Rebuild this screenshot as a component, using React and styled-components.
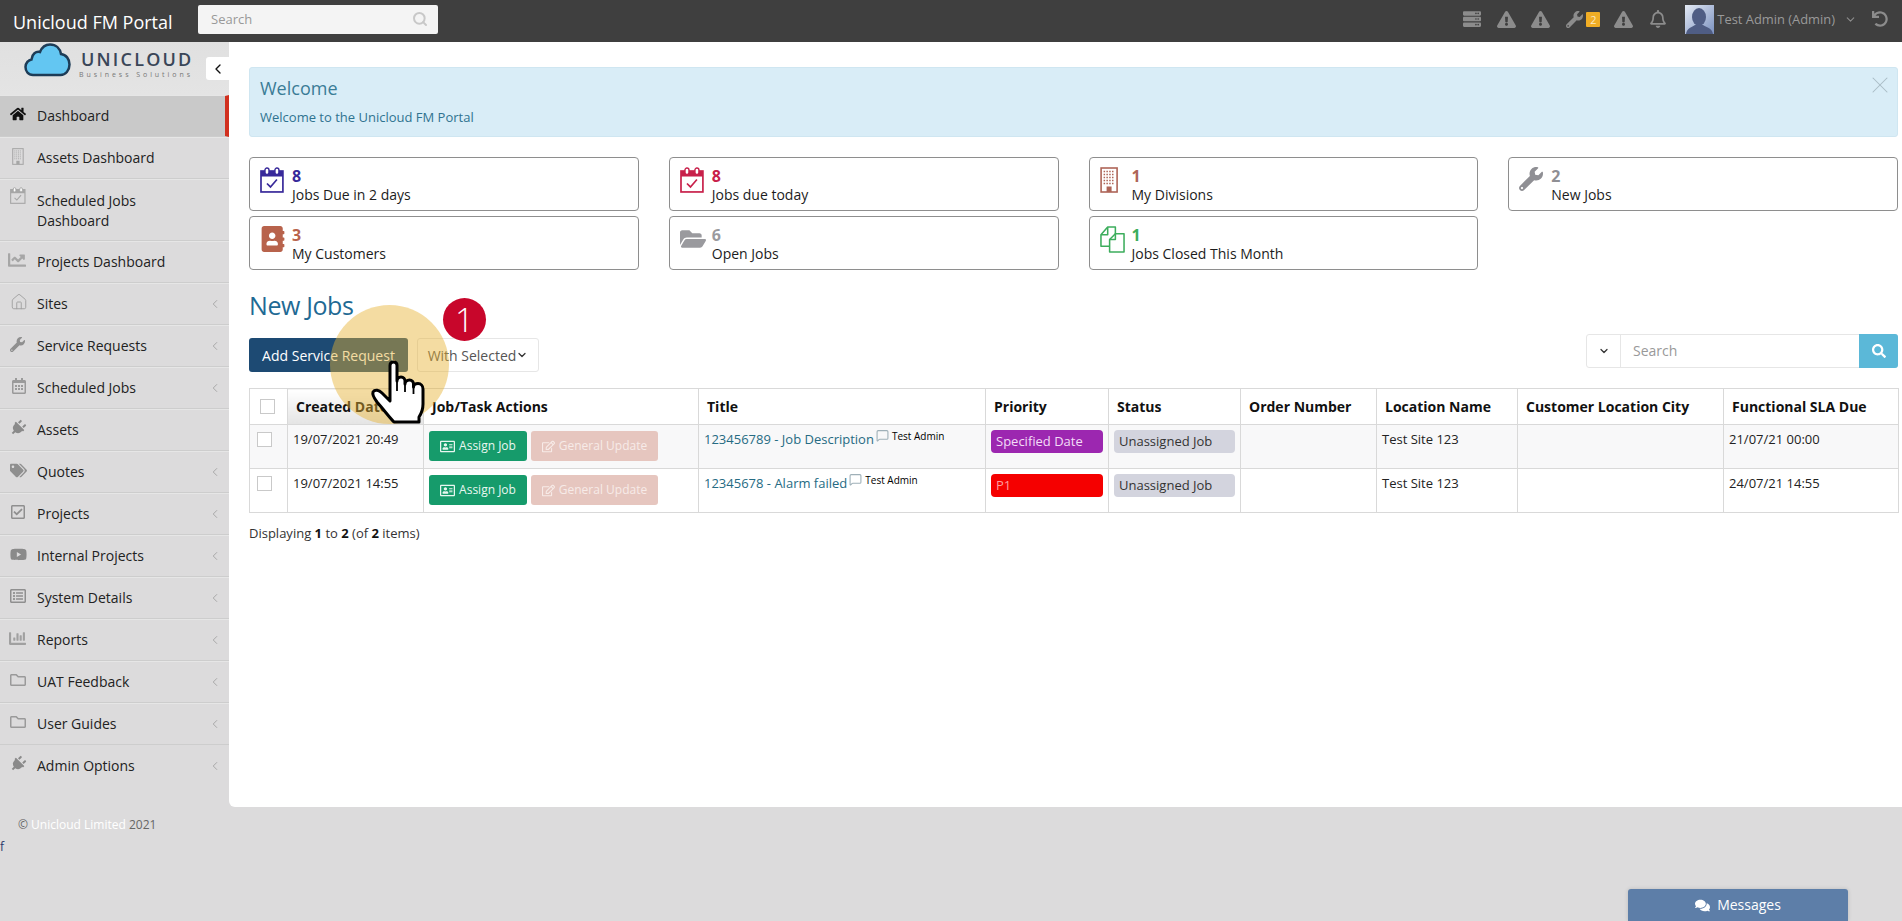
import React from "react";
import styled, { createGlobalStyle } from "styled-components";
import {
  FaHome, FaChartLine, FaWrench, FaRegCalendarAlt, FaPlug, FaTags,
  FaRegCheckSquare, FaYoutube, FaRegListAlt, FaChartBar, FaRegFolder, FaComments, FaServer,
  FaExclamationTriangle, FaRegBell, FaUndo, FaAddressBook, FaFolderOpen, FaRegAddressCard,
  FaRegEdit, FaSearch,
} from "react-icons/fa";
import { ChevronLeft, ChevronDown, Home, Search as SearchLine, X, MessageSquare } from "lucide-react";

const Global = createGlobalStyle`
  html, body { margin: 0; padding: 0; height: 100%; overflow: hidden; }
  body { font-family: "Open Sans", "Liberation Sans", sans-serif; background: #dcdbdc; color: #222; }
  * { box-sizing: border-box; }
`;

const Page = styled.div`display:flex;flex-direction:column;height:921px;position:relative;overflow:hidden;`;

const TopBar = styled.header`height:42px;flex:none;background:#3f3f3f;display:flex;align-items:center;position:relative;`;
const Brand = styled.div`width:198px;padding-left:13px;color:#fff;font-size:18px;line-height:42px;padding-top:2px;white-space:nowrap;`;
const TopSearch = styled.div`width:240px;height:29px;margin-top:-4px;background:#f4f4f4;border-radius:2px;display:flex;align-items:center;justify-content:space-between;padding:0 10px 0 13px;color:#999;font-size:13px;svg{color:#c8c8c8;}`;
const TopRight = styled.div`margin-left:auto;display:flex;align-items:center;height:42px;color:#8c8c8c;padding-right:14px;`;
const TopIcon = styled.span`display:flex;margin-left:${p => p.$ml}px;margin-top:-4px;`;
const Count = styled.span`width:14px;height:15px;background:#f0ad25;color:#fbe9c0;font-size:11px;line-height:15px;text-align:center;margin-left:3px;margin-top:-4px;border-radius:1px;`;
const Avatar = styled.div`width:29px;height:29px;margin-left:18px;margin-top:-4px;background:linear-gradient(135deg,#e4eaf4,#7b91c0);display:flex;align-items:flex-end;overflow:hidden;`;
const UserName = styled.span`font-size:12.9px;color:#9a9a9a;margin-left:3px;margin-top:-4px;white-space:nowrap;`;

const Main = styled.div`display:flex;height:765px;flex:none;`;
const Side = styled.nav`width:229px;flex:none;background:#dcdbdc;`;
const LogoArea = styled.div`height:53px;display:flex;align-items:flex-start;background:linear-gradient(#e0e0e0,#e4e4e4);`;
const Logo = styled.div`display:flex;padding:1px 0 0 24px;width:206px;`;
const LogoText = styled.div`margin-left:10px;padding-top:5px;`;
const LogoTitle = styled.div`font-size:18px;font-weight:600;letter-spacing:2.2px;line-height:22px;color:#3a4658;`;
const LogoSub = styled.div`font-size:7px;letter-spacing:2.95px;line-height:9px;color:#777;white-space:nowrap;margin-left:-2px;`;
const Toggle = styled.div`width:23px;height:23px;margin-top:15px;background:#fff;border-radius:3px 0 0 3px;display:flex;align-items:center;justify-content:center;color:#111;`;
const Item = styled.div`
  height:${p => (p.$tall ? 62 : 42)}px;display:flex;align-items:${p => (p.$tall ? "flex-start" : "center")};position:relative;
  background:${p => (p.$active ? "#c9c9c9" : "transparent")};
  border-right:${p => (p.$active ? "4px solid #d1301f" : "0")};
  border-top:1px solid #e6e6e6;border-bottom:1px solid #cdcdcd;
  padding-top:${p => (p.$tall ? "11px" : "0")};
  &:last-child{border-color:transparent;}
`;
const ItemIcon = styled.span`
  width:37px;padding-left:${p => p.$pl}px;flex:none;display:flex;color:${p => p.$c};margin-top:-4px;
  svg{transform:rotate(${p => p.$rot || 0}deg);}
`;
const ItemLabel = styled.span`font-size:14px;line-height:20px;color:#222;flex:1;`;
const Caret = styled.span`display:flex;color:#a0a0a0;margin-right:7px;`;

const Content = styled.main`flex:1;background:#fff;border-bottom-left-radius:6px;padding:25px 4px 0 20px;min-width:0;`;
const Alert = styled.div`height:70px;background:#d9edf7;border:1px solid #cfe6f1;border-radius:3px;padding:8px 10px 0 10px;color:#31708f;display:flex;justify-content:space-between;`;
const AlertTitle = styled.div`font-size:18px;line-height:24px;color:#3a7c96;`;
const AlertText = styled.div`font-size:13px;line-height:18px;margin-top:8px;color:#2f7390;`;
const Close = styled.span`color:#a9bcc6;display:flex;height:28px;margin-top:-5px;margin-right:-7px;`;

const Cards = styled.section`display:grid;grid-template-columns:repeat(4,1fr);column-gap:30px;row-gap:5px;margin-top:20px;grid-auto-rows:54px;`;
const Card = styled.div`border:1px solid #8e8e8e;border-radius:4px;display:flex;padding:9px 0 0 10px;background:#fff;`;
const CardIcon = styled.div`width:32px;flex:none;display:flex;color:${p => p.$c};`;
const CardNum = styled.div`font-size:16px;font-weight:700;line-height:19px;color:${p => p.$c};`;
const CardLabel = styled.div`font-size:14px;line-height:18px;color:#1c1c1c;`;

const Heading = styled.h1`font-size:25px;font-weight:400;letter-spacing:-.4px;line-height:32px;margin:19px 0 13px;color:#1f6a94;`;
const Toolbar = styled.div`display:flex;justify-content:space-between;align-items:flex-start;height:34px;margin-bottom:20px;position:relative;`;
const BtnRow = styled.div`display:flex;gap:9px;margin-top:4px;`;
const PrimaryBtn = styled.div`width:159px;height:34px;background:#1d4a73;color:#fff;border-radius:3px;font-size:14px;display:flex;align-items:center;justify-content:center;`;
const GhostBtn = styled.div`width:122px;height:34px;border:1px solid #e6e6e6;border-radius:3px;color:#555;font-size:14px;display:flex;align-items:center;justify-content:center;svg{color:#333;}`;
const SearchGroup = styled.div`width:312px;height:34px;display:flex;border:1px solid #e6e6e6;border-radius:3px;`;
const SearchDrop = styled.div`width:34px;border-right:1px solid #e6e6e6;display:flex;align-items:center;justify-content:center;color:#333;`;
const SearchInput = styled.div`flex:1;color:#999;font-size:14px;line-height:32px;padding-left:12px;`;
const SearchBtn = styled.div`width:39px;margin:-1px;background:#5bb8d8;color:#fff;display:flex;align-items:center;justify-content:center;border-radius:0 3px 3px 0;`;

const Glow = styled.div`position:absolute;left:81px;top:-29px;width:119px;height:119px;border-radius:50%;background:rgba(231,177,49,.45);z-index:3;pointer-events:none;`;
const Bubble = styled.div`position:absolute;left:194px;top:-36px;width:43px;height:43px;border-radius:50%;background:#c8062b;color:#fff;font-size:33px;font-weight:300;line-height:43px;text-align:center;z-index:4;`;
const Hand = styled.svg`position:absolute;left:123px;top:28px;width:52px;height:61px;z-index:5;overflow:visible;`;

const Table = styled.table`width:1649px;border-collapse:collapse;table-layout:fixed;border:1px solid #d9d9d9;`;
const Col = styled.col`width:${p => p.$w}px;`;
const HeadRow = styled.tr`height:36px;`;
const Th = styled.th`border:1px solid #d9d9d9;font-size:14px;font-weight:700;text-align:left;padding:0 0 0 8px;color:#111;white-space:nowrap;background:${p => (p.$sorted ? "linear-gradient(#fff,#e4e4e4)" : "#fff")};`;
const Tr = styled.tr`height:44px;background:${p => (p.$odd ? "#f8f8f9" : "#fff")};`;
const Td = styled.td`border:1px solid #d9d9d9;font-size:13px;line-height:18px;vertical-align:top;padding:5px 5px 0;color:#222;white-space:nowrap;`;
const Check = styled.span`display:block;width:15px;height:15px;border:1px solid #c9c9c9;background:#fff;margin-left:${p => p.$ml}px;margin-top:${p => p.$mt}px;`;
const ActionRow = styled.div`display:flex;gap:4px;margin-top:1px;`;
const AssignBtn = styled.div`width:98px;height:30px;background:#169b6b;color:#e9f7f1;border-radius:3px;font-size:12px;display:flex;align-items:center;justify-content:center;gap:4px;`;
const UpdateBtn = styled.div`width:127px;height:30px;background:#e6c6bf;color:#f7ebe8;border-radius:3px;font-size:12px;display:flex;align-items:center;justify-content:center;gap:4px;`;
const TitleRow = styled.div`display:flex;align-items:flex-start;`;
const JobLink = styled.a`color:#266b83;`;
const Bub = styled.span`color:#9fb0b8;display:flex;margin-left:2px;margin-top:-1px;`;
const Author = styled.span`font-size:10px;line-height:14px;color:#000;margin-left:3px;margin-top:-1px;`;
const Pill = styled.div`height:23px;border-radius:4px;font-size:13px;line-height:23px;padding-left:5px;background:${p => p.$bg};color:${p => p.$c};`;
const Summary = styled.p`margin:11px 0 0;font-size:13px;line-height:18px;color:#333;b{color:#111;}`;

const Footer = styled.footer`flex:1;position:relative;padding:10px 0 0 18px;font-size:12px;line-height:16px;color:#666;`;
const FooterBrand = styled.span`color:#fff;`;
const Stray = styled.div`margin-left:-18px;margin-top:6px;font-size:12px;color:#2a3a6a;line-height:16px;`;
const Messages = styled.div`position:absolute;left:1628px;bottom:0;width:220px;height:32px;background:#5d7ea8;color:#fff;border-radius:3px 3px 0 0;font-size:14px;display:flex;align-items:center;justify-content:center;gap:7px;box-shadow:0 0 4px rgba(0,0,0,.15);`;

const CalCheck = ({ size }) => (
  <svg width={size * 0.92} height={size} viewBox="0 0 24 26" aria-hidden="true">
    <rect x="1" y="4" width="22" height="21" fill="none" stroke="currentColor" strokeWidth="1.7" />
    <rect x="1" y="4" width="22" height="5.500" fill="currentColor" />
    <rect x="5" y="1" width="4" height="6.500" rx="2" fill="#fff" stroke="currentColor" strokeWidth="1.400" />
    <rect x="15" y="1" width="4" height="6.500" rx="2" fill="#fff" stroke="currentColor" strokeWidth="1.400" />
    <path d="M7 16.500l3.500 3.500 6.500-7.500" fill="none" stroke="currentColor" strokeWidth="1.700" />
  </svg>
);

const Tower = ({ size }) => (
  <svg width={size * 0.7} height={size} viewBox="0 0 18 26" aria-hidden="true">
    <rect x="1" y="1" width="16" height="24" fill="none" stroke="currentColor" strokeWidth="1.600" />
    <path d="M3.500 4.500h11M3.500 7.500h11M3.500 10.500h11M3.500 13.500h11M3.500 16.500h11" stroke="currentColor" strokeWidth="1.400" strokeDasharray="1.500 1.300" />
    <rect x="6.500" y="19.500" width="5" height="5.500" fill="currentColor" />
  </svg>
);

const DocPair = ({ size }) => (
  <svg width={size} height={size * 1.08} viewBox="0 0 26 28" fill="none" stroke="currentColor" strokeWidth="1.600" strokeLinejoin="round" aria-hidden="true">
    <path d="M8 1h8v20H1V9z" />
    <path d="M8 1v8H1" />
    <path d="M16 8h9v19H10V14z" fill="#fff" />
    <path d="M16 8v6h-6" />
  </svg>
);

const nav = [
  { l: "Dashboard", I: FaHome, s: 16, c: "#111", active: true, pl: 10 },
  { l: "Assets Dashboard", I: Tower, s: 17, c: "#a6a6a6", pl: 12 },
  { l: <>Scheduled Jobs<br />Dashboard</>, I: CalCheck, s: 17, c: "#a6a6a6", tall: true, pl: 10 },
  { l: "Projects Dashboard", I: FaChartLine, s: 18, c: "#a6a6a6", pl: 8 },
  { l: "Sites", I: Home, s: 18, c: "#a0a0a0", sub: true, thin: true, pl: 10 },
  { l: "Service Requests", I: FaWrench, s: 15, c: "#8f8f8f", sub: true, pl: 10 },
  { l: "Scheduled Jobs", I: FaRegCalendarAlt, s: 16, c: "#9a9a9a", sub: true, pl: 11 },
  { l: "Assets", I: FaPlug, s: 16, c: "#8a8a8a", rot: 45, pl: 10 },
  { l: "Quotes", I: FaTags, s: 17, c: "#8f8f8f", sub: true, pl: 10 },
  { l: "Projects", I: FaRegCheckSquare, s: 16, c: "#8f8f8f", sub: true, pl: 10 },
  { l: "Internal Projects", I: FaYoutube, s: 17, c: "#8a8a8a", sub: true, pl: 10 },
  { l: "System Details", I: FaRegListAlt, s: 16, c: "#8f8f8f", sub: true, pl: 10 },
  { l: "Reports", I: FaChartBar, s: 17, c: "#a0a0a0", sub: true, pl: 9 },
  { l: "UAT Feedback", I: FaRegFolder, s: 16, c: "#9a9a9a", sub: true, pl: 10 },
  { l: "User Guides", I: FaRegFolder, s: 16, c: "#9a9a9a", sub: true, pl: 10 },
  { l: "Admin Options", I: FaPlug, s: 16, c: "#8a8a8a", sub: true, rot: 45, pl: 10 },
];

const cards = [
  { n: 8, t: "Jobs Due in 2 days", I: CalCheck, c: "#38299a", s: 26 },
  { n: 8, t: "Jobs due today", I: CalCheck, c: "#c8204a", s: 26 },
  { n: 1, t: "My Divisions", I: Tower, c: "#ae6558", s: 26 },
  { n: 2, t: "New Jobs", I: FaWrench, c: "#8f8f94", s: 24 },
  { n: 3, t: "My Customers", I: FaAddressBook, c: "#b8634c", s: 26 },
  { n: 6, t: "Open Jobs", I: FaFolderOpen, c: "#9a9a9e", s: 26 },
  { n: 1, t: "Jobs Closed This Month", I: DocPair, c: "#3cad5c", s: 25 },
];

const rows = [
  { d: "19/07/2021 20:49", t: "123456789 - Job Description", p: "Specified Date", bg: "#9c27b0", pc: "#f3dcf7", due: "21/07/21 00:00" },
  { d: "19/07/2021 14:55", t: "12345678 - Alarm failed", p: "P1", bg: "#f50000", pc: "#ff9d9d", due: "24/07/21 14:55" },
];

const widths = [38, 136, 275, 287, 123, 132, 136, 141, 206, 175];
const heads = ["Created Date", "Job/Task Actions", "Title", "Priority", "Status", "Order Number", "Location Name", "Customer Location City", "Functional SLA Due"];

export default function App() {
  return (
    <Page>
      <Global />
      <TopBar>
        <Brand>Unicloud FM Portal</Brand>
        <TopSearch>Search<SearchLine size={16} strokeWidth={3} /></TopSearch>
        <TopRight>
          <TopIcon $ml={0}><FaServer size={18} /></TopIcon>
          <TopIcon $ml={16}><FaExclamationTriangle size={19} /></TopIcon>
          <TopIcon $ml={15}><FaExclamationTriangle size={19} /></TopIcon>
          <TopIcon $ml={16}><FaWrench size={17} /></TopIcon>
          <Count>2</Count>
          <TopIcon $ml={14}><FaExclamationTriangle size={19} /></TopIcon>
          <TopIcon $ml={16}><FaRegBell size={18} /></TopIcon>
          <Avatar>
            <svg width="29" height="27" viewBox="0 0 29 27" aria-hidden="true">
              <ellipse cx="14" cy="10" rx="7" ry="9" fill="#4f5d84" />
              <path d="M1 27c1-6 6-7 9-9h8c3 2 9 3 10 9z" fill="#4f5d84" />
            </svg>
          </Avatar>
          <UserName>Test Admin (Admin)</UserName>
          <TopIcon $ml={9}><ChevronDown size={13} /></TopIcon>
          <TopIcon $ml={15}><FaUndo size={16} /></TopIcon>
        </TopRight>
      </TopBar>

      <Main>
        <Side>
          <LogoArea>
            <Logo>
              <svg width="47" height="34" viewBox="0 0 47 34" aria-hidden="true">
                <path d="M9 32C4 32 1.500 28 1.500 24c0-4 3-7 6-7.500C8 11 12 8 16 9c2-5 6-7.500 10-7.500 6 0 10 4 11 9.500 5 .5 8.500 5 8.500 10.500 0 6-4 10.500-9 10.500z" fill="#63c6f2" stroke="#1d3c57" strokeWidth="2.500" />
              </svg>
              <LogoText>
                <LogoTitle>UNICLOUD</LogoTitle>
                <LogoSub>Business Solutions</LogoSub>
              </LogoText>
            </Logo>
            <Toggle><ChevronLeft size={16} strokeWidth={2} /></Toggle>
          </LogoArea>
          {nav.map((n, i) => (
            <Item key={i} $active={n.active} $tall={n.tall}>
              <ItemIcon $c={n.c} $pl={n.pl} $rot={n.rot}>
                <n.I size={n.s} {...(n.thin ? { strokeWidth: 1.25 } : {})} />
              </ItemIcon>
              <ItemLabel>{n.l}</ItemLabel>
              {n.sub && <Caret><ChevronLeft size={14} strokeWidth={1.5} /></Caret>}
            </Item>
          ))}
        </Side>

        <Content>
          <Alert>
            <div>
              <AlertTitle>Welcome</AlertTitle>
              <AlertText>Welcome to the Unicloud FM Portal</AlertText>
            </div>
            <Close><X size={28} strokeWidth={0.9} /></Close>
          </Alert>

          <Cards>
            {cards.map((c, i) => (
              <Card key={i}>
                <CardIcon $c={c.c}><c.I size={c.s} /></CardIcon>
                <div>
                  <CardNum $c={c.c}>{c.n}</CardNum>
                  <CardLabel>{c.t}</CardLabel>
                </div>
              </Card>
            ))}
          </Cards>

          <Heading>New Jobs</Heading>
          <Toolbar>
            <BtnRow>
              <PrimaryBtn>Add Service Request</PrimaryBtn>
              <GhostBtn>With Selected<ChevronDown size={12} strokeWidth={2.5} /></GhostBtn>
            </BtnRow>
            <SearchGroup>
              <SearchDrop><ChevronDown size={12} strokeWidth={2.5} /></SearchDrop>
              <SearchInput>Search</SearchInput>
              <SearchBtn><FaSearch size={14} /></SearchBtn>
            </SearchGroup>
            <Glow />
            <Bubble>1</Bubble>
            <Hand viewBox="0 0 52 61" aria-hidden="true">
              <path d="M18 3.500C18 1 19.500 0 21.500 0S25 1 25 3.500V19c0-2 1.500-4 4-4s4 2 4 4v3c0-2 2-4 4.500-4s4 2 4 4v3c0-2 2-3.500 4.500-3.500 3 0 5 2.500 5 5.500v15c0 6-2 10-4 13v5H22C18 56 12 48 5 40 2 36 0 33 1 30c2-3 6-2 9 1l8 8z" fill="#fff" stroke="#000" strokeWidth="3" strokeLinejoin="round" />
              <path d="M25 19v10M33 22v8M41.500 25v7" stroke="#000" strokeWidth="1.800" fill="none" />
            </Hand>
          </Toolbar>

          <Table>
            <colgroup>{widths.map((w, i) => <Col key={i} $w={w} />)}</colgroup>
            <thead>
              <HeadRow>
                <Th><Check $ml={2} $mt={0} /></Th>
                {heads.map((h, i) => <Th key={h} $sorted={i === 0}>{h}</Th>)}
              </HeadRow>
            </thead>
            <tbody>
              {rows.map((r, i) => (
                <Tr key={r.d} $odd={i === 0}>
                  <Td><Check $ml={2} $mt={2} /></Td>
                  <Td>{r.d}</Td>
                  <Td>
                    <ActionRow>
                      <AssignBtn><FaRegAddressCard size={15} />Assign Job</AssignBtn>
                      <UpdateBtn><FaRegEdit size={13} />General Update</UpdateBtn>
                    </ActionRow>
                  </Td>
                  <Td>
                    <TitleRow>
                      <JobLink>{r.t}</JobLink>
                      <Bub><MessageSquare size={13} /></Bub>
                      <Author>Test Admin</Author>
                    </TitleRow>
                  </Td>
                  <Td><Pill $bg={r.bg} $c={r.pc}>{r.p}</Pill></Td>
                  <Td><Pill $bg="#d3d4de" $c="#333">Unassigned Job</Pill></Td>
                  <Td />
                  <Td>Test Site 123</Td>
                  <Td />
                  <Td>{r.due}</Td>
                </Tr>
              ))}
            </tbody>
          </Table>
          <Summary>Displaying <b>1</b> to <b>2</b> (of <b>2</b> items)</Summary>
        </Content>
      </Main>

      <Footer>
        © <FooterBrand>Unicloud Limited</FooterBrand> 2021
        <Stray>f</Stray>
        <Messages><FaComments size={15} />Messages</Messages>
      </Footer>
    </Page>
  );
}
